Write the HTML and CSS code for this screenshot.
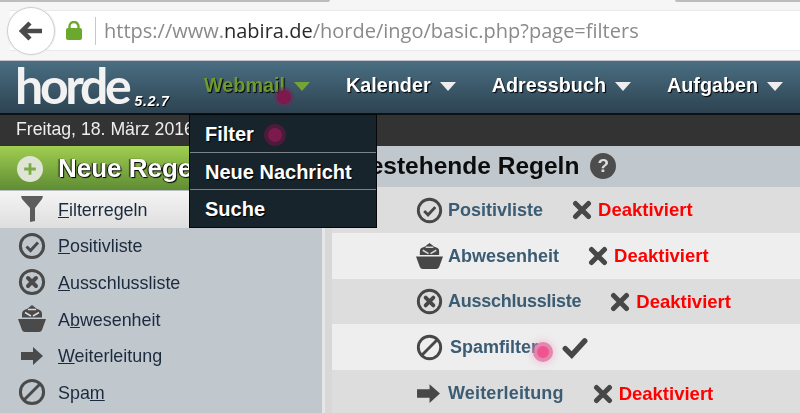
FILE: index.html
```html
<!DOCTYPE html>
<html lang="de">
<head>
<meta charset="utf-8">
<title>Horde Filter</title>
<link rel="stylesheet" href="styles.css">
</head>
<body>
<svg class="sprite" width="0" height="0" aria-hidden="true">
  <symbol id="i-check" viewBox="0 0 28 28"><circle cx="14" cy="14" r="11.6" fill="none" stroke="currentColor" stroke-width="3"/><path d="M8.5 14.5l4 4 7.5-8" fill="none" stroke="currentColor" stroke-width="3"/></symbol>
  <symbol id="i-x" viewBox="0 0 28 28"><circle cx="14" cy="14" r="11.6" fill="none" stroke="currentColor" stroke-width="3"/><path d="M10 10l8 8M18 10l-8 8" fill="none" stroke="currentColor" stroke-width="4" stroke-linecap="round"/></symbol>
  <symbol id="i-ban" viewBox="0 0 28 28"><circle cx="14" cy="14" r="11.6" fill="none" stroke="currentColor" stroke-width="3"/><path d="M6 22L22 6" stroke="currentColor" stroke-width="3"/></symbol>
  <symbol id="i-ship" viewBox="0 0 28 28"><path d="M0 14h28l-4 11q-.8 2-3 2H7q-2.200 0-3-2z" fill="currentColor"/><path d="M4 12.500V8.500Q4 5 9 4L14 0l5 4q5 1 5 4.500v4z" fill="currentColor"/><path d="M7 7.500l6 3.500M21 7.500l-6 3.500M10 4.500h8" stroke="#d8d8d8" stroke-width="1.600" fill="none"/></symbol>
  <symbol id="i-arrow" viewBox="0 0 24 24"><path d="M1 8h12V3l10 9-10 9v-5H1z" fill="currentColor"/></symbol>
  <symbol id="i-funnel" viewBox="0 0 28 28"><path d="M3 1h22l-1 3-7 9v13l-5 1V13L4 4z" fill="currentColor"/></symbol>
  <symbol id="i-cross" viewBox="0 0 20 20"><path d="M3.500 3.500l13 13M16.500 3.500l-13 13" stroke="currentColor" stroke-width="5" stroke-linecap="round"/></symbol>
  <symbol id="i-tick" viewBox="0 0 24 20"><path d="M3 10.500l6 6L21 3.500" fill="none" stroke="currentColor" stroke-width="5" stroke-linecap="round"/></symbol>
</svg>
<div class="page">
  <div class="browser">
    <div class="rim"><span class="rim-left"></span><span class="rim-right"></span></div>
    <div class="urlbar">
      <span class="back"><svg class="back-icon" viewBox="0 0 24 20"><path d="M11 2L3 10l8 8M4 10h19" fill="none" stroke="currentColor" stroke-width="4.500"/></svg></span>
      <svg class="lock" viewBox="0 0 16 19"><path d="M3.500 8V5.500a4.500 4.500 0 0 1 9 0V8" fill="none" stroke="currentColor" stroke-width="2.400"/><rect y="7" width="16" height="12" rx="2" fill="currentColor"/></svg>
      <span class="sep"></span>
      <span class="url">https://www.<b>nabira.de</b>/horde/ingo/basic.php?page=filters</span>
    </div>
  </div>
  <header class="topnav">
    <div class="logo"><span class="logo-name">horde</span><span class="logo-ver">5.2.7</span></div>
    <nav class="menu">
      <span class="menu-item active">Webmail<i class="tri"></i></span>
      <span class="menu-item">Kalender<i class="tri"></i></span>
      <span class="menu-item">Adressbuch<i class="tri"></i></span>
      <span class="menu-item">Aufgaben<i class="tri"></i></span>
    </nav>
  </header>
  <div class="datebar">Freitag, 18. März 2016</div>
  <div class="main">
    <aside class="sidebar">
      <div class="newrule">
        <span class="plus"><svg viewBox="0 0 12 12"><path d="M6 1v10M1 6h10" stroke="currentColor" stroke-width="2.400"/></svg></span>
        <span class="newrule-text">Neue Regel</span>
      </div>
      <a class="side-item current"><svg class="side-icon"><use href="#i-funnel"/></svg><span class="side-label"><u>F</u>ilterregeln</span></a>
      <a class="side-item"><svg class="side-icon"><use href="#i-check"/></svg><span class="side-label"><u>P</u>ositivliste</span></a>
      <a class="side-item"><svg class="side-icon"><use href="#i-x"/></svg><span class="side-label"><u>A</u>usschlussliste</span></a>
      <a class="side-item"><svg class="side-icon"><use href="#i-ship"/></svg><span class="side-label">A<u>b</u>wesenheit</span></a>
      <a class="side-item"><svg class="side-icon arrow"><use href="#i-arrow"/></svg><span class="side-label"><u>W</u>eiterleitung</span></a>
      <a class="side-item"><svg class="side-icon"><use href="#i-ban"/></svg><span class="side-label">Spa<u>m</u></span></a>
    </aside>
    <div class="gutter"></div>
    <section class="content">
      <h1 class="title">Bestehende Regeln <span class="help">?</span></h1>
      <div class="rule"><svg class="rule-icon"><use href="#i-check"/></svg><span class="rule-name">Positivliste</span><svg class="state"><use href="#i-cross"/></svg><span class="off">Deaktiviert</span></div>
      <div class="rule"><svg class="rule-icon"><use href="#i-ship"/></svg><span class="rule-name">Abwesenheit</span><svg class="state"><use href="#i-cross"/></svg><span class="off">Deaktiviert</span></div>
      <div class="rule"><svg class="rule-icon"><use href="#i-x"/></svg><span class="rule-name tight">Ausschlussliste</span><svg class="state"><use href="#i-cross"/></svg><span class="off">Deaktiviert</span></div>
      <div class="rule"><svg class="rule-icon"><use href="#i-ban"/></svg><span class="rule-name spam">Spamfilter</span><svg class="state tick"><use href="#i-tick"/></svg></div>
      <div class="rule"><svg class="rule-icon arrow"><use href="#i-arrow"/></svg><span class="rule-name wide">Weiterleitung</span><svg class="state"><use href="#i-cross"/></svg><span class="off">Deaktiviert</span></div>
    </section>
  </div>
  <div class="dropdown">
    <div class="drop-item">Filter</div>
    <div class="drop-item">Neue Nachricht</div>
    <div class="drop-item">Suche</div>
  </div>
  <span class="dot dot-nav"></span>
  <span class="dot dot-filter"></span>
  <span class="dot dot-spam"></span>
</div>
</body>
</html>
```
FILE: styles.css
```css
* { box-sizing: border-box; }
html, body { margin: 0; padding: 0; }
body { font-family: "Liberation Sans", Arial, sans-serif; background: #ddd; overflow: hidden; }
.sprite { position: absolute; }
.page { position: relative; width: 800px; height: 413px; overflow: hidden; filter: blur(0.55px); display: flex; flex-direction: column; }

.browser { height: 61px; flex: none; background: #f6f6f6; border-bottom: 1px solid #c4c4c4; }
.rim { height: 10px; display: flex; justify-content: space-between; align-items: flex-start; }
.rim-left { width: 330px; height: 2px; background: #bdbdbd; border-bottom-right-radius: 3px; }
.rim-right { width: 125px; height: 2px; background: #bdbdbd; border-bottom-left-radius: 3px; }
.urlbar { height: 41px; background: #fff; border-top: 1px solid #e9e9e9; border-bottom: 1px solid #e9e9e9; display: flex; align-items: center; margin-left: 10px; }
.back { width: 48px; height: 48px; margin-left: -3px; flex: none; border-radius: 50%; background: #fff; border: 1px solid #cfcfcf; color: #4a4a4a; display: flex; align-items: center; justify-content: center; box-shadow: 0 0 0 1px #f0f0f0; }
.back-icon { width: 24px; height: 20px; }
.lock { width: 16px; height: 19px; color: #6aa82e; margin-left: 11px; flex: none; }
.sep { width: 1px; height: 28px; background: #c8c8c8; margin-left: 13px; flex: none; }
.url { font-family: "Open Sans", sans-serif; font-size: 20px; color: #8a8a8a; margin-left: 8px; white-space: nowrap; }
.url b { font-weight: 400; color: #2a2a2a; }

.topnav { height: 54px; flex: none; background: linear-gradient(#4a6e82, #2d4352); border-bottom: 2px solid #0c1114; display: flex; align-items: center; padding-left: 15px; padding-bottom: 3px; }
.logo { width: 189px; flex: none; display: flex; align-items: flex-end; }
.logo-name { font-family: Lato, sans-serif; font-size: 50px; line-height: 42px; height: 44px; color: #f2f2f2; letter-spacing: -3.300px; font-weight: 700; }
.logo-ver { font-size: 14px; font-weight: bold; font-style: italic; color: #fff; text-shadow: 1px 1px 0 #000; margin-left: 6px; line-height: 14px; letter-spacing: .8px; }
.menu { display: flex; gap: 36px; }
.menu-item { display: flex; align-items: center; gap: 9px; font-size: 19.800px; font-weight: bold; color: #fff; text-shadow: 1px 1px 1px #000; white-space: nowrap; }
.menu-item.active { color: #6f9a2f; }
.tri { width: 0; height: 0; border-left: 8.500px solid transparent; border-right: 8.500px solid transparent; border-top: 9px solid #eee; margin-top: 2px; }
.active .tri { border-top-color: #76a336; }

.datebar { height: 31px; flex: none; background: #333; color: #eee; font-size: 17.700px; padding-left: 16px; line-height: 29px; white-space: nowrap; }

.main { flex: 1; display: flex; min-height: 0; }
.sidebar { width: 322px; flex: none; background: #c0c8ce; }
.newrule { height: 45px; background: linear-gradient(#a0ce50, #5e8c34); border-bottom: 1px solid #b8bdc0; display: flex; align-items: center; padding-left: 17px; padding-top: 1px; gap: 15px; }
.plus { width: 26px; height: 26px; border-radius: 50%; background: #dfe5d6; color: #7cab45; display: flex; align-items: center; justify-content: center; }
.plus svg { width: 14px; height: 14px; }
.newrule-text { font-size: 26px; font-weight: bold; color: #fff; text-shadow: 1px 1px 1px #000, -1px 0 1px #000; white-space: nowrap; }
.side-item { height: 36.600px; display: flex; align-items: center; padding-left: 18px; gap: 12px; font-size: 17.900px; color: #1c2a3e; }
.side-label { padding-top: 2px; }
.side-item.current { background: linear-gradient(#f4f4f4, #dedede); }
.side-icon { width: 28px; height: 28px; color: #4a4a4a; flex: none; }
.side-icon.arrow { width: 24px; height: 24px; margin-left: 2px; margin-right: 2px; }
.current .side-icon { color: #5c5c5c; }

.gutter { width: 10px; flex: none; background: linear-gradient(90deg, #e6e6e6 30%, #d8d8d8 30%); }
.content { flex: 1; min-width: 0; background: #c0c8ce; }
.title { height: 41px; margin: 0; padding-left: 20px; padding-bottom: 2px; font-size: 24.500px; font-weight: bold; color: #0c0c0c; display: flex; align-items: center; gap: 4px; white-space: pre; }
.help { width: 26px; height: 26px; border-radius: 50%; background: #4d4d4d; color: #ddd; font-size: 19px; display: flex; align-items: center; justify-content: center; }
.rule { height: 45.800px; background: #eee; display: flex; align-items: center; padding-left: 84px; padding-top: 1px; font-size: 18px; font-weight: bold; }
.rule:nth-of-type(odd) { background: #ddd; }
.rule-icon { width: 27px; height: 27px; color: #474747; flex: none; }
.rule-icon.arrow { width: 25px; height: 25px; margin-right: 2px; }
.rule-name { color: #3b5c73; margin-left: 5px; }
.rule-name.spam { margin-left: 7px; }
.rule-name.tight { letter-spacing: -.25px; }
.rule-name.wide { letter-spacing: .15px; }
.state { width: 20px; height: 20px; color: #474747; margin-left: 29px; flex: none; }
.state.tick { width: 26px; height: 22px; margin-left: 24px; }
.off { color: #ff0000; margin-left: 6px; font-size: 18.500px; }

.dropdown { position: absolute; left: 189px; top: 114px; width: 188px; height: 114px; background: #18242b; border: 1px solid #050708; display: flex; flex-direction: column; }
.drop-item { flex: 1; display: flex; align-items: center; padding-left: 15px; padding-top: 2px; font-size: 20px; font-weight: bold; color: #fff; text-shadow: 1px 1px 1px #000; border-bottom: 1px solid #7b8589; }
.drop-item:last-child { border-bottom: 0; }

.dot { position: absolute; border-radius: 50%; }
.dot-nav { left: 277px; top: 90px; width: 14px; height: 14px; background: #7c1a4c; box-shadow: 0 0 0 3px rgba(110, 40, 90, .5); }
.dot-filter { left: 268px; top: 128px; width: 14px; height: 14px; background: #7c1a4c; box-shadow: 0 0 0 4px #4c1a3c; }
.dot-spam { left: 537px; top: 346px; width: 12px; height: 12px; background: #f0548f; box-shadow: 0 0 0 4px rgba(224, 110, 160, .75), 0 0 6px 6px rgba(240, 160, 200, .45); }
```
